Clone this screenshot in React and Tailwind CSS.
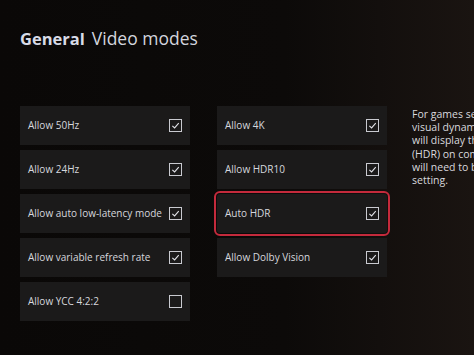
const leftRows = [
  { label: 'Allow 50Hz', checked: true },
  { label: 'Allow 24Hz', checked: true },
  { label: 'Allow auto low-latency mode', checked: true },
  { label: 'Allow variable refresh rate', checked: true },
  { label: 'Allow YCC 4:2:2', checked: false },
];

const rightRows = [
  { label: 'Allow 4K', checked: true },
  { label: 'Allow HDR10', checked: true },
  { label: 'Auto HDR', checked: true, focused: true },
  { label: 'Allow Dolby Vision', checked: true },
];

const helpLines = [
  'For games set up in SDR, Auto HDR adds',
  'visual dynamic range to games. The console',
  'will display the game in High Dynamic Range',
  '(HDR) on compatible TVs. HDR10 support',
  'will need to be enabled for the Auto HDR',
  'setting.',
];

function Checkbox({ checked }) {
  return (
    <div className="w-[13px] h-[13px] shrink-0 border-[1.5px] border-[#c9cad0] flex items-center justify-center">
      {checked && (
        <svg width="9" height="9" viewBox="0 0 10 10" fill="none">
          <path d="M1.5 5.3 L4 7.7 L8.6 2.3" stroke="#e2e3e8" strokeWidth="1.2" />
        </svg>
      )}
    </div>
  );
}

function Row({ label, checked, focused }) {
  return (
    <div
      className={
        'h-[39px] bg-[#1b1a1a] flex items-center justify-between pl-2 pr-2 ' +
        (focused ? 'rounded-[3px] outline-2 outline-offset-[1px] outline-[#c42a3c]' : '')
      }
    >
      <span className="text-[10px] text-[#d6d7dd] whitespace-nowrap">{label}</span>
      <Checkbox checked={checked} />
    </div>
  );
}

export default function App() {
  return (
    <div className="w-[474px] h-[355px] overflow-hidden bg-[linear-gradient(90deg,#0a0807_0%,#0c0a09_60%,#1a1411_100%)] font-['Open_Sans',sans-serif]">
      <div className="pt-[25px] pl-[20px] flex items-baseline gap-[7px]">
        <span className="text-[16.5px] font-bold text-[#d8dbe7]">General</span>
        <span className="text-[17.5px] text-[#d3d5de]">Video modes</span>
      </div>

      <div className="mt-[54px] pl-[20px] flex items-start w-max">
        <div className="w-[170px] shrink-0 flex flex-col gap-[5px]">
          {leftRows.map((r) => (
            <Row key={r.label} {...r} />
          ))}
        </div>
        <div className="w-[170px] shrink-0 ml-[27px] flex flex-col gap-[5px]">
          {rightRows.map((r) => (
            <Row key={r.label} {...r} />
          ))}
        </div>
        <div className="shrink-0 ml-[25px] pt-[2px] flex flex-col text-[10.5px] leading-[13.3px] text-[#d9d9de] whitespace-nowrap">
          {helpLines.map((l) => (
            <span key={l}>{l}</span>
          ))}
        </div>
      </div>
    </div>
  );
}
